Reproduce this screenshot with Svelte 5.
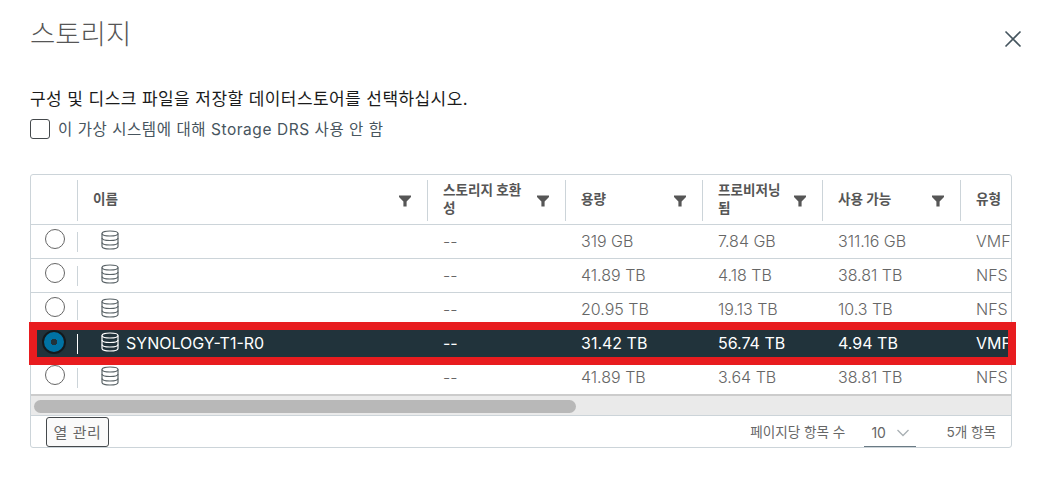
<script>
  const columns = [
    { label: "이름", width: 350 },
    { label: "스토리지 호환성", width: 138 },
    { label: "용량", width: 137 },
    { label: "프로비저닝됨", width: 120 },
    { label: "사용 가능", width: 138 },
    { label: "유형", width: 120, noFilter: true }
  ];

  const rows = [
    { name: "", compat: "--", capacity: "319 GB", provisioned: "7.84 GB", free: "311.16 GB", type: "VMFS" },
    { name: "", compat: "--", capacity: "41.89 TB", provisioned: "4.18 TB", free: "38.81 TB", type: "NFS" },
    { name: "", compat: "--", capacity: "20.95 TB", provisioned: "19.13 TB", free: "10.3 TB", type: "NFS" },
    { name: "SYNOLOGY-T1-R0", compat: "--", capacity: "31.42 TB", provisioned: "56.74 TB", free: "4.94 TB", type: "VMFS", selected: true },
    { name: "", compat: "--", capacity: "41.89 TB", provisioned: "3.64 TB", free: "38.81 TB", type: "NFS" }
  ];
</script>

<div class="modal">
  <header class="title-bar">
    <h1>스토리지</h1>
    <svg class="close" width="18" height="18" viewBox="0 0 18 18">
      <path d="M1.5 1.5 L16.5 16.5 M16.5 1.5 L1.5 16.5" />
    </svg>
  </header>

  <p class="intro">구성 및 디스크 파일을 저장할 데이터스토어를 선택하십시오.</p>
  <label class="drs">
    <span class="box"></span>
    <span class="drs-text">이 가상 시스템에 대해 Storage DRS 사용 안 함</span>
  </label>

  <div class="grid">
    <div class="scroller">
      <div class="row head">
        <div class="cell radio-cell"><span class="sep"></span></div>
        {#each columns as col}
          <div class="cell th" style="width: {col.width}px">
            <span class="th-label">{col.label}</span>
            {#if !col.noFilter}
              <svg class="filter" width="12" height="12" viewBox="0 0 12 12">
                <path d="M0 0.5 H12 V2 L7.6 6.4 V11.5 L4.4 11.5 V6.4 L0 2 Z" />
              </svg>
            {/if}
            <span class="sep"></span>
          </div>
        {/each}
      </div>

      {#each rows as r}
        <div class="row body" class:selected={r.selected}>
          <div class="cell radio-cell">
            <span class="radio"></span>
            <span class="sep short"></span>
          </div>
          <div class="cell td name" style="width: {columns[0].width}px">
            <svg class="db" width="18" height="20" viewBox="0 0 18 20">
              <path d="M1 3.5 C1 1.8 4.5 1 9 1 C13.5 1 17 1.8 17 3.5 V16.5 C17 18.2 13.5 19 9 19 C4.5 19 1 18.2 1 16.5 Z" />
              <path d="M1 3.5 C1 5.2 4.5 6 9 6 C13.5 6 17 5.2 17 3.5" />
              <path d="M1 8 C1 9.7 4.5 10.5 9 10.5 C13.5 10.5 17 9.7 17 8" />
              <path d="M1 12.5 C1 14.2 4.5 15 9 15 C13.5 15 17 14.2 17 12.5" />
            </svg>
            <span>{r.name}</span>
          </div>
          <div class="cell td" style="width: {columns[1].width}px">{r.compat}</div>
          <div class="cell td" style="width: {columns[2].width}px">{r.capacity}</div>
          <div class="cell td" style="width: {columns[3].width}px">{r.provisioned}</div>
          <div class="cell td" style="width: {columns[4].width}px">{r.free}</div>
          <div class="cell td" style="width: {columns[5].width}px">{r.type}</div>
        </div>
      {/each}
    </div>

    <div class="scrollbar"><div class="thumb"></div></div>

    <footer class="foot">
      <button class="manage">열 관리</button>
      <span class="per-page">페이지당 항목 수</span>
      <span class="select">
        10
        <svg width="12" height="8" viewBox="0 0 12 8"><path d="M0.5 1 L6 6.5 L11.5 1" /></svg>
      </span>
      <span class="count">5개 항목</span>
    </footer>
  </div>

  <div class="highlight"></div>
</div>

<style>
  :global(body) {
    margin: 0;
    background: #fff;
  }

  .modal {
    position: relative;
    width: 1037px;
    height: 477px;
    box-sizing: border-box;
    padding: 0 25px 0 30px;
    overflow: hidden;
    font-family: "Inter", "Noto Sans CJK KR", sans-serif;
  }

  .title-bar {
    display: flex;
    justify-content: space-between;
    height: 66px;
    margin-right: -10px;
  }

  h1 {
    margin: 16px 0 0;
    font-size: 27.5px;
    line-height: 36px;
    font-weight: 300;
    color: #565656;
  }

  .close {
    margin-top: 30px;
    fill: none;
    stroke: #45555e;
    stroke-width: 1.6;
  }

  .intro {
    margin: 21px 0 0;
    font-size: 17px;
    line-height: 24px;
    letter-spacing: 0.42px;
    color: #1b1b1b;
  }

  .drs {
    display: flex;
    align-items: center;
    gap: 8px;
    margin-top: 7px;
    font-size: 15.5px;
    letter-spacing: 0.55px;
    line-height: 20px;
    color: #47555e;
  }

  .drs-text {
    padding-top: 2px;
  }

  .box {
    width: 18px;
    height: 18px;
    border: 1px solid #45494c;
    border-radius: 3px;
  }

  .grid {
    margin-top: 34px;
    width: 982px;
    height: 274px;
    box-sizing: border-box;
    border: 1px solid #ccd4d9;
    border-radius: 3px;
    display: flex;
    flex-direction: column;
    overflow: hidden;
  }

  .scroller {
    height: 221px;
    overflow: hidden;
  }

  .row {
    display: flex;
    width: 1200px;
    box-sizing: border-box;
    border-bottom: 1px solid #ccd4d9;
  }

  .head {
    height: 50px;
  }

  .body {
    height: 34px;
    color: #666;
    font-size: 16px;
    font-weight: 300;
  }

  .body:last-child {
    height: 35px;
    border-bottom: 2px solid #ccc;
  }

  .selected {
    background: #21333b;
    color: #fff;
    font-weight: 400;
    border-bottom-color: #21333b;
  }

  .cell {
    position: relative;
    flex: none;
    box-sizing: border-box;
    display: flex;
    align-items: center;
  }

  .radio-cell {
    width: 47px;
    padding: 0 0 0 14px;
  }

  .sep {
    position: absolute;
    right: 0;
    top: 5px;
    bottom: 3px;
    width: 1px;
    background: #ccd4d9;
  }

  .sep.short {
    top: 7px;
    bottom: 6px;
  }

  .selected .sep {
    background: #fff;
  }

  .th {
    justify-content: space-between;
    padding: 0 17px 0 15px;
    font-size: 13.6px;
    line-height: 18px;
    font-weight: 700;
    color: #565656;
  }

  .th-label {
    word-break: break-all;
    margin-top: -2px;
  }

  .filter {
    flex: none;
    margin-left: 8px;
    margin-top: 3px;
    fill: #565656;
  }

  .td {
    padding: 0 0 2px 15px;
    white-space: nowrap;
  }

  .name {
    padding-left: 23px;
    gap: 7px;
  }

  .radio {
    width: 18px;
    height: 18px;
    margin-top: -6px;
    border: 1px solid #666;
    border-radius: 50%;
    background: #fff;
  }

  .selected .radio {
    position: relative;
    left: -3px;
    width: 20px;
    height: 20px;
    margin-top: -4px;
    border: 2px solid #14191c;
    box-shadow: 0 0 0 1px #21333b;
    background: radial-gradient(circle, #21333b 0 3px, #0072a3 3.5px);
  }

  .db {
    flex: none;
    margin-top: -1px;
    fill: none;
    stroke: #5b6468;
    stroke-width: 1.2;
  }

  .selected .db {
    stroke: #fff;
  }

  .scrollbar {
    height: 20px;
    flex: none;
    box-sizing: border-box;
    padding: 4px 3px;
    background: #eaeaea;
    border-bottom: 1px solid #ccd4d9;
  }

  .thumb {
    width: 542px;
    height: 13px;
    border-radius: 7px;
    background: #b8b8b8;
  }

  .foot {
    flex: 1;
    display: flex;
    align-items: center;
    padding: 0 15px;
    font-size: 13.6px;
    color: #666;
  }

  .manage {
    width: 63px;
    height: 30px;
    padding: 0;
    border: 1px solid #45494c;
    border-radius: 3px;
    background: #fafafa;
    color: #666;
    font: inherit;
    font-size: 15px;
    letter-spacing: 0.6px;
  }

  .per-page {
    margin-left: auto;
    margin-bottom: 2px;
  }

  .select {
    display: flex;
    align-items: center;
    justify-content: space-between;
    box-sizing: border-box;
    width: 52px;
    height: 31px;
    margin: 0 30px 0 19px;
    padding: 3px 7px 0;
    border-bottom: 1px solid #6a7a84;
    font-size: 14px;
  }

  .select svg {
    fill: none;
    stroke: #a9b0b4;
    stroke-width: 1.3;
  }

  .count {
    margin-bottom: 2px;
  }

  /* annotation drawn over the screenshot */
  .highlight {
    position: absolute;
    left: 29px;
    top: 322px;
    width: 987px;
    height: 43px;
    box-sizing: border-box;
    border: 8px solid #e81c1f;
  }
</style>
